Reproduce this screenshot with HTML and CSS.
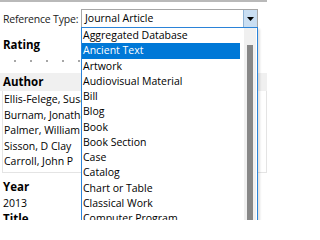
FILE: index.html
```html
<!DOCTYPE html>
<html>
<head>
<meta charset="utf-8">
<link rel="stylesheet" href="styles.css">
</head>
<body>
<div class="panel">
  <div class="typerow">
    <span class="label">Reference Type:</span>
    <div class="combo">
      <span class="value">Journal Article</span>
      <span class="btn"><svg width="7" height="4" viewBox="0 0 7 4"><path d="M0 0H7L3.5 4Z" fill="#000"/></svg></span>
    </div>
  </div>
  <div class="field">
    <div class="head">Rating</div>
    <div class="dots"><i></i><i></i><i></i><i></i><i></i></div>
  </div>
  <div class="field author">
    <div class="head bar">Author</div>
    <div class="names">
      <div>Ellis-Felege, Susan N</div>
      <div>Burnam, Jonathan S</div>
      <div>Palmer, William E</div>
      <div>Sisson, D Clay</div>
      <div>Carroll, John P</div>
    </div>
  </div>
  <div class="field">
    <div class="head">Year</div>
    <div class="val">2013</div>
    <div class="head">Title</div>
  </div>

  <div class="dropdown">
    <ul class="items">
      <li>Aggregated Database</li>
      <li class="sel">Ancient Text</li>
      <li>Artwork</li>
      <li>Audiovisual Material</li>
      <li>Bill</li>
      <li>Blog</li>
      <li>Book</li>
      <li>Book Section</li>
      <li>Case</li>
      <li>Catalog</li>
      <li>Chart or Table</li>
      <li>Classical Work</li>
      <li>Computer Program</li>
      <li>Conference Paper</li>
    </ul>
    <div class="scroll"><div class="track"><div class="thumb"></div></div></div>
  </div>
</div>
</body>
</html>
```
FILE: styles.css
```css
html, body {
  margin: 0;
  padding: 0;
  background: #fff;
}
body {
  width: 267px;
  height: 220px;
  overflow: hidden;
  font-family: "Open Sans", "Noto Sans", sans-serif;
  font-size: 10.5px;
  color: #000;
}
.panel {
  position: relative;
  height: 218px;
  border-top: 2px solid #b9b9b9;
  overflow: hidden;
}
.typerow {
  display: flex;
  align-items: center;
  padding: 7px 0 0 3px;
  gap: 3px;
}
.label {
  flex: none;
  width: 75px;
  color: #222;
  white-space: nowrap;
  letter-spacing: -0.2px;
}
.combo {
  flex: 1;
  display: flex;
  height: 17px;
  border: 1px solid #a6a6a6;
  margin-right: 9px;
}
.value {
  flex: 1;
  padding-left: 3px;
  line-height: 17px;
}
.btn {
  width: 13px;
  background: #c9def2;
  border-left: 1px solid #8fb3d6;
  display: flex;
  align-items: center;
  justify-content: center;
}
.field {
  display: flex;
  flex-direction: column;
}
.head {
  font-weight: bold;
  font-size: 11.5px;
  padding-left: 3px;
  line-height: 16px;
}
.typerow + .field {
  padding-top: 9px;
}
.dots {
  display: flex;
  gap: 14px;
  padding: 7px 0 0 14px;
  height: 13px;
}
.dots i {
  width: 2px;
  height: 2px;
  background: #8a8a8a;
  border-radius: 1px;
}
.author .bar {
  background: #f0f0f0;
  line-height: 18px;
}
.names {
  margin-left: 2px;
  border: 1px solid #e4e4e4;
  border-top: none;
  padding: 1px 0 2px 1px;
  line-height: 15.5px;
  white-space: nowrap;
}
.author + .field {
  padding-top: 6px;
}
.val {
  padding-left: 3px;
  line-height: 16px;
}
.dropdown {
  position: absolute;
  left: 81px;
  top: 25px;
  width: 175px;
  height: 200px;
  border: 1px solid #2b83d8;
  background: #fff;
  display: flex;
  box-shadow: 2px 2px 2px rgba(0,0,0,0.12);
}
.items {
  list-style: none;
  margin: 0;
  padding: 0;
  flex: 1;
}
.items li {
  height: 15.25px;
  line-height: 15.25px;
  padding-left: 1px;
  white-space: nowrap;
}
.items li.sel {
  background: #0078d7;
  color: #fff;
}
.scroll {
  width: 17px;
  padding-left: 4px;
  box-sizing: border-box;
}
.track {
  width: 12px;
  height: 100%;
  background: #f0f0f0;
  padding-top: 17px;
  box-sizing: border-box;
}
.thumb {
  margin-left: 3px;
  width: 6px;
  height: 100%;
  background: #878787;
}
```
